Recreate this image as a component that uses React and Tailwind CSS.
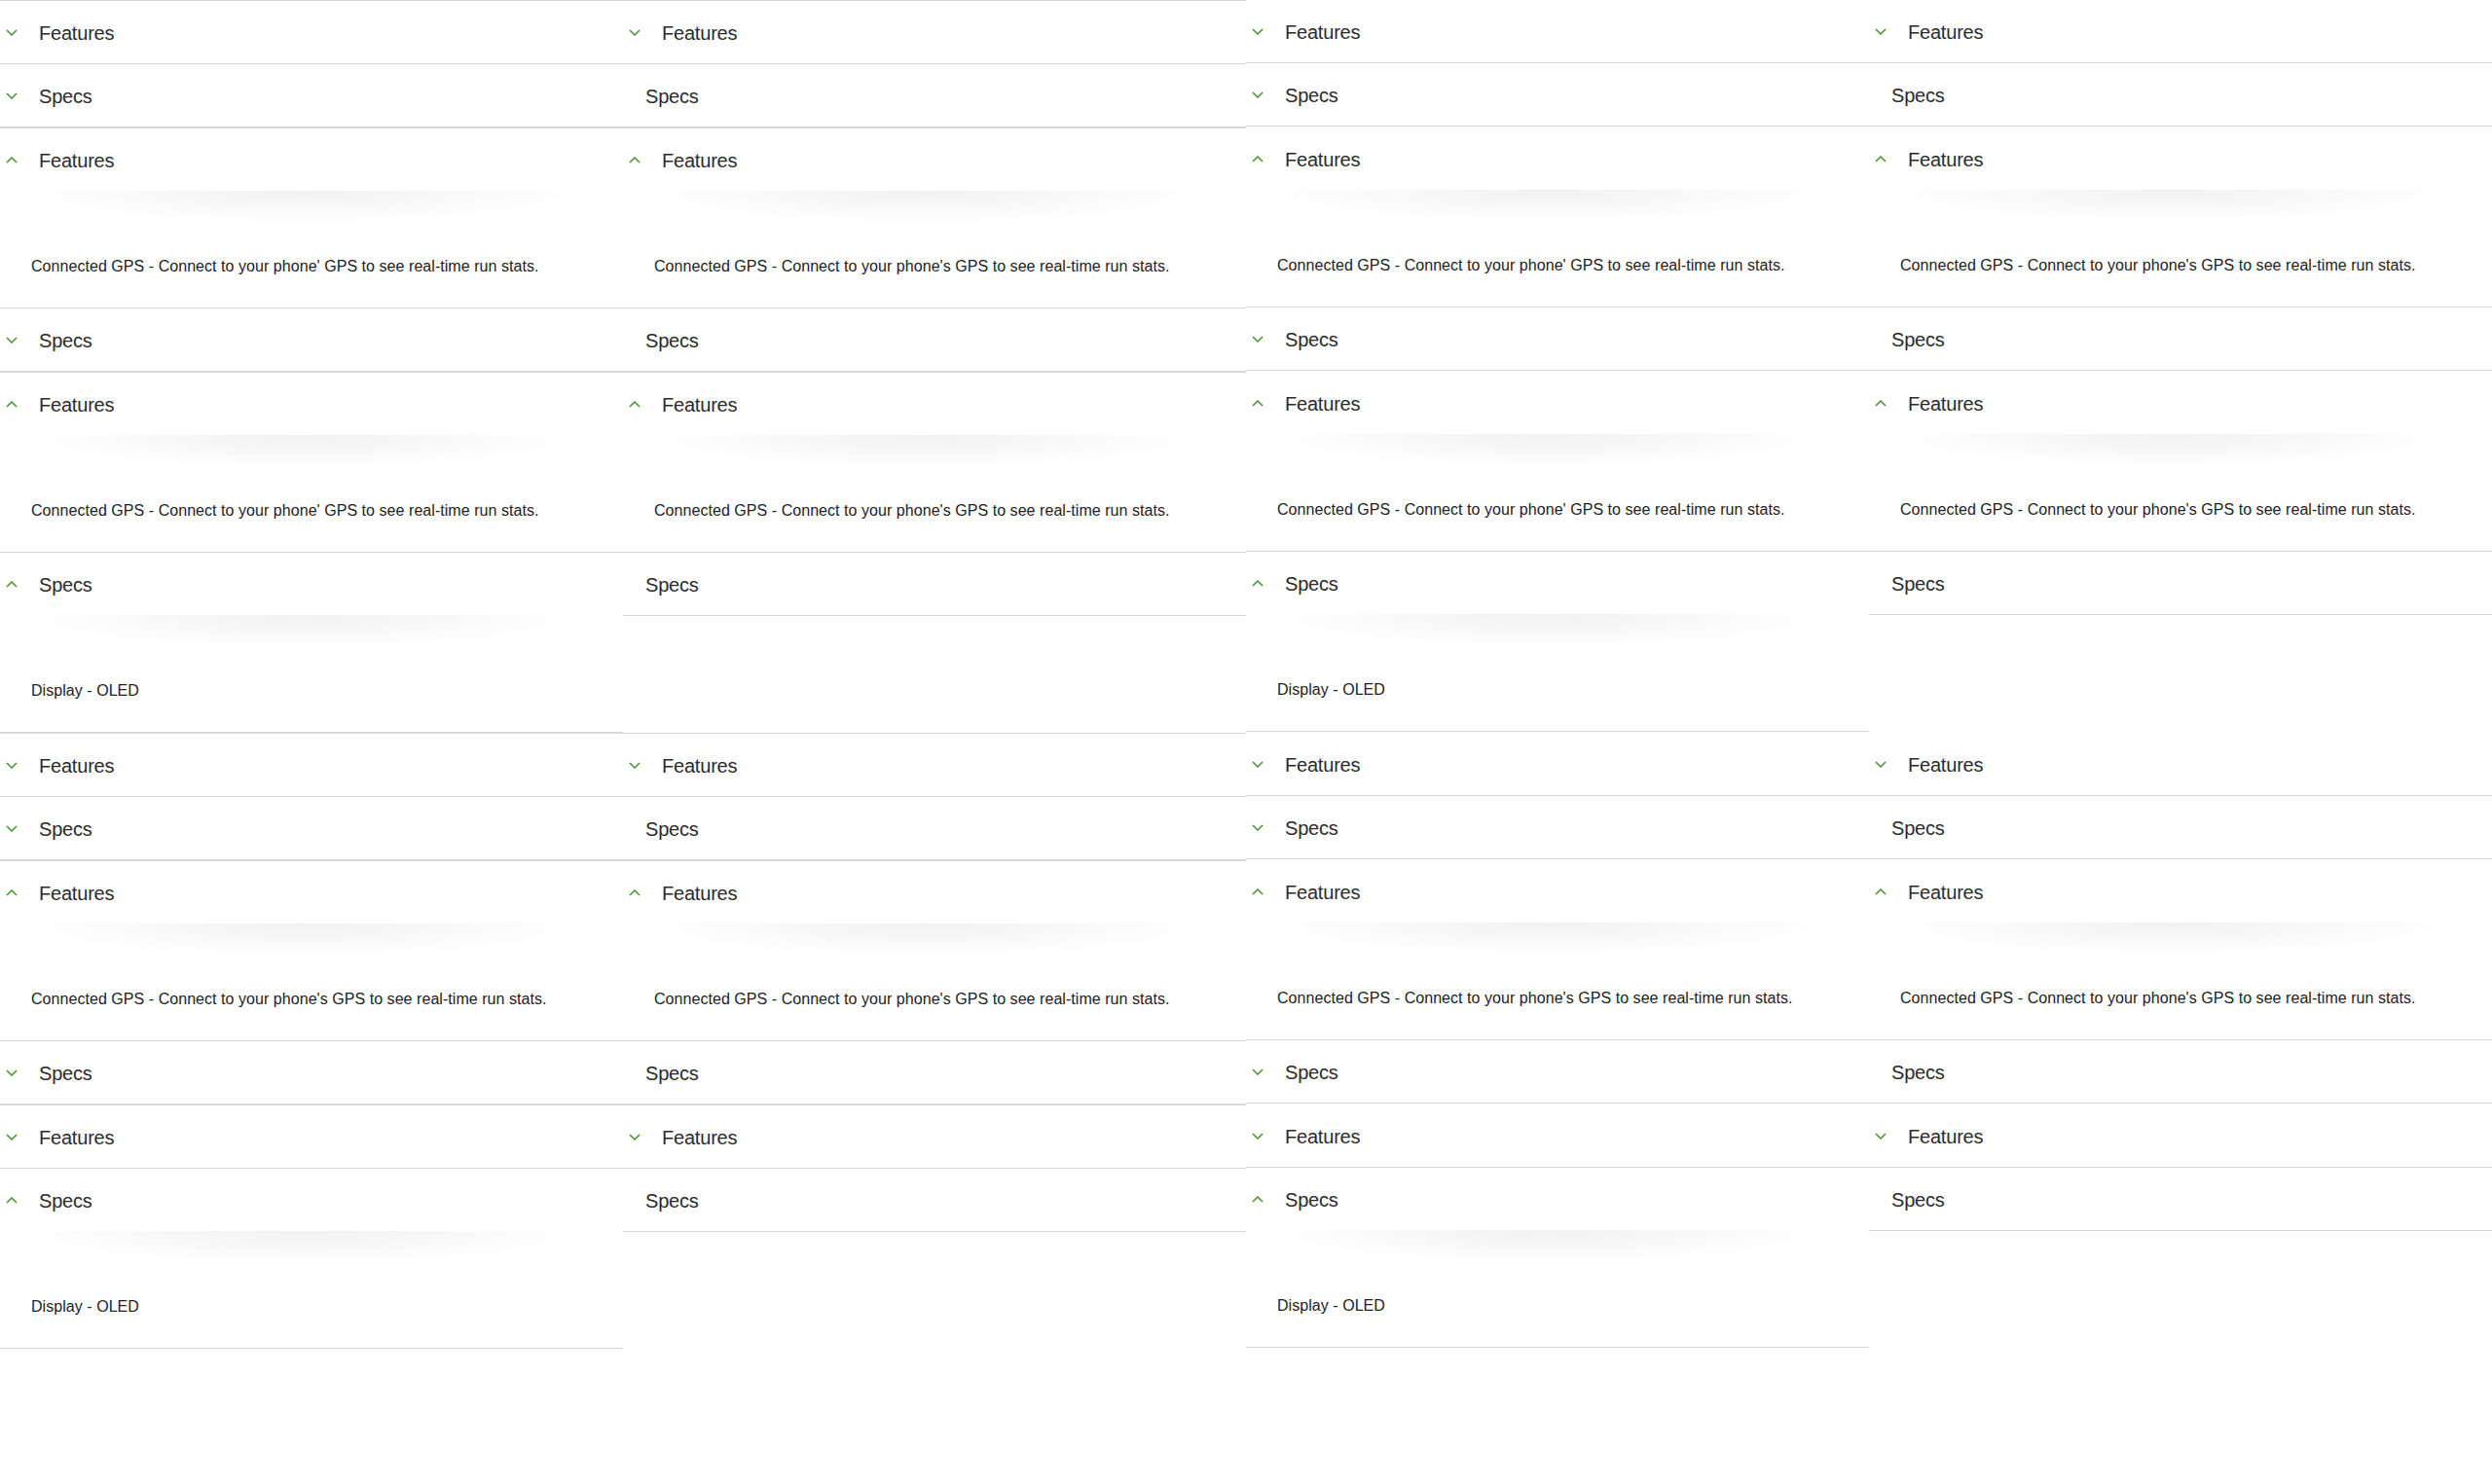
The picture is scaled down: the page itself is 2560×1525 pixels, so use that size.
import React from "react";

const FONT = "font-['Liberation_Sans',Arial,sans-serif]";

function Chevron({ up }) {
  return (
    <svg width="12" height="7" viewBox="0 0 12 7" className="shrink-0" fill="none">
      <path
        d={up ? "M1 6 L6 1 L11 6" : "M1 1 L6 6 L11 1"}
        stroke="#43962a"
        strokeWidth="1.5"
      />
    </svg>
  );
}

function Item({ title, open, icon, children }) {
  return (
    <div className="border-b border-[#d6d6d6]">
      <div
        className={
          icon
            ? "flex h-16 items-center pt-[1px] pl-[6px]"
            : "flex h-16 items-center pt-[1px] pl-[23px]"
        }
      >
        {icon && <Chevron up={open} />}
        <span
          className={
            icon
              ? "ml-[22px] text-[20px] leading-6 tracking-[-0.2px] text-[#2b2b2b]"
              : "text-[20px] leading-6 tracking-[-0.2px] text-[#2b2b2b]"
          }
        >
          {title}
        </span>
      </div>
      {open && (
        <div className="h-[120px]">
          <div className="ml-[22px] h-[34px] w-[576px] bg-[radial-gradient(ellipse_50%_100%_at_50%_0%,rgba(0,0,0,0.055),rgba(0,0,0,0))]" />
          <p className="pl-[32px] pt-[34px] text-[16px] leading-5 tracking-[0.05px] text-[#222222]">
            {children}
          </p>
        </div>
      )}
    </div>
  );
}

function Accordion({ bordered, specIcon, fOpen, sOpen, apos }) {
  const gps = apos
    ? "Connected GPS - Connect to your phone' GPS to see real-time run stats."
    : "Connected GPS - Connect to your phone's GPS to see real-time run stats.";
  return (
    <div className={bordered ? "self-start border-t border-[#d6d6d6]" : "self-start"}>
      <Item title="Features" open={fOpen} icon>
        {gps}
      </Item>
      <Item title="Specs" open={specIcon && sOpen} icon={specIcon}>
        Display - OLED
      </Item>
    </div>
  );
}

const COLS = [
  { bordered: true, specIcon: true },
  { bordered: true, specIcon: false },
  { bordered: false, specIcon: true },
  { bordered: false, specIcon: false },
];

const ROWS = [
  { fOpen: false, sOpen: false, early: true },
  { fOpen: true, sOpen: false, early: true },
  { fOpen: true, sOpen: true, early: true },
  { fOpen: false, sOpen: false, early: false },
  { fOpen: true, sOpen: false, early: false },
  { fOpen: false, sOpen: true, early: false },
];

export default function App() {
  return (
    <div className={`min-h-[1525px] w-[2560px] bg-white ${FONT}`}>
      <div className="grid grid-cols-4 items-start">
        {ROWS.map((r, ri) =>
          COLS.map((c, ci) => (
            <Accordion
              key={`${ri}-${ci}`}
              bordered={c.bordered}
              specIcon={c.specIcon}
              fOpen={r.fOpen}
              sOpen={r.sOpen}
              apos={r.early && c.specIcon}
            />
          ))
        )}
      </div>
    </div>
  );
}
